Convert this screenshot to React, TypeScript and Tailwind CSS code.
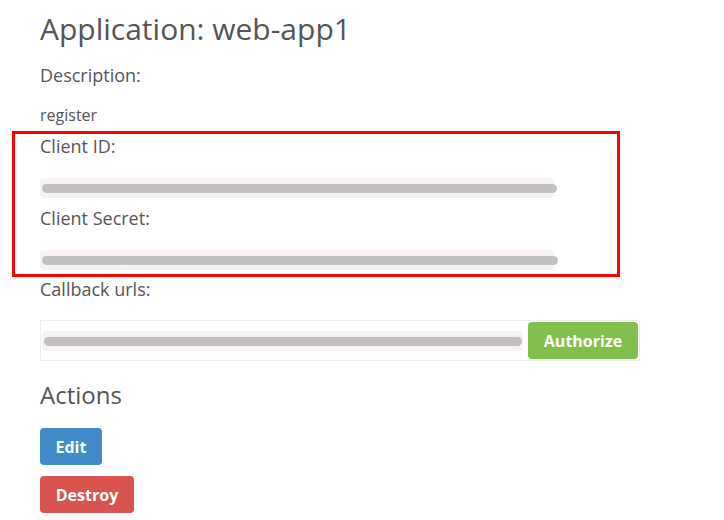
import React from 'react';

const RedactedCode = ({ width, barWidth }: { width: string; barWidth: string }) => (
  <div className={`h-[20px] rounded-[4px] bg-[#f9f2f4] pt-[6px] pl-[2px] ${width}`}>
    <div className={`h-[9px] rounded-full bg-[#c0c0c0] ${barWidth}`} />
  </div>
);

export default function App() {
  return (
    <div className="min-h-[520px] bg-white pl-10 pt-3 font-['Open_Sans',sans-serif] text-[#555]">
      <h1 className="text-[30px] leading-[33px]">Application: web-app1</h1>

      <h4 className="mt-5 text-[18px] leading-[20px]">Description:</h4>
      <p className="mt-5 text-[16px] leading-[20px]">register</p>

      {/* highlighted credentials */}
      <div className="-ml-7 mt-[6px] w-[608px] border-[3px] border-[#f00] pl-[25px] pt-[2px] pb-[4px]">
        <h4 className="text-[18px] leading-[20px]">Client ID:</h4>
        <div className="mt-[22px]">
          <RedactedCode width="w-[514px]" barWidth="w-[515px]" />
        </div>
        <h4 className="mt-[10px] text-[18px] leading-[20px]">Client Secret:</h4>
        <div className="mt-[22px]">
          <RedactedCode width="w-[514px]" barWidth="w-[516px]" />
        </div>
      </div>

      <h4 className="mt-[2px] text-[18px] leading-[20px]">Callback urls:</h4>
      <div className="mt-[21px] flex h-[41px] w-[600px] items-center gap-[5px] border border-[#eee] pl-[1px]">
        <div className="h-[20px] w-[481px] rounded-[4px] bg-[#f9f2f4] pt-[6px] pl-[2px]">
          <div className="h-[9px] w-[478px] rounded-full bg-[#c0c0c0]" />
        </div>
        <button className="h-[37px] w-[110px] rounded-[4px] bg-[#82c04e] text-[16px] font-bold text-white">
          Authorize
        </button>
      </div>

      <h3 className="mt-[21px] text-[24px] leading-[26px]">Actions</h3>
      <div className="mt-5 flex flex-col items-start gap-[11px]">
        <button className="h-[37px] w-[62px] rounded-[4px] bg-[#428bca] text-[16px] font-bold text-white">
          Edit
        </button>
        <button className="h-[37px] w-[94px] rounded-[4px] bg-[#d9534f] text-[16px] font-bold text-white">
          Destroy
        </button>
      </div>
    </div>
  );
}
